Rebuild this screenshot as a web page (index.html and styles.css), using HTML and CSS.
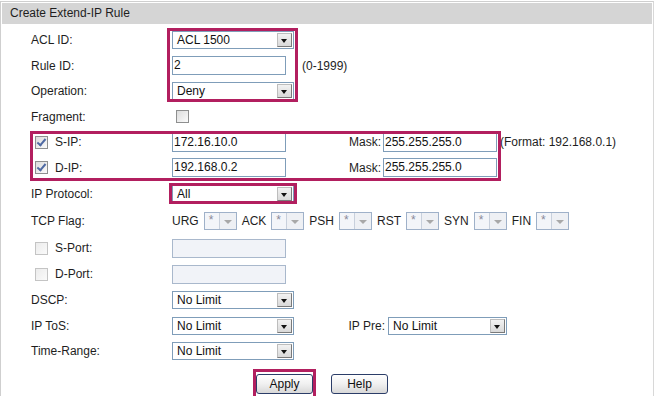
FILE: index.html
```html
<!DOCTYPE html>
<html lang="en">
<head>
  <meta charset="UTF-8">
  <title>Create Extend-IP Rule</title>
  <link rel="stylesheet" href="styles.css">
</head>
<body>

<div class="panel">
  <div class="panel-title">Create Extend-IP Rule</div>

  <div class="form">
    <div class="row h26">
      <span class="label">ACL ID:</span>
      <div class="select w122"><span>ACL 1500</span><i class="arrow"></i></div>
    </div>
    <div class="row h25">
      <span class="label">Rule ID:</span>
      <div class="input">2</div>
      <span class="hint">(0-1999)</span>
    </div>
    <div class="row h26">
      <span class="label">Operation:</span>
      <div class="select w122"><span>Deny</span><i class="arrow"></i></div>
    </div>
    <div class="row h25">
      <span class="label">Fragment:</span>
      <span class="check frag"></span>
    </div>
    <div class="row h26">
      <span class="label"><span class="check checked"></span>S-IP:</span>
      <div class="input">172.16.10.0</div>
      <span class="side-label mask">Mask:</span>
      <div class="input">255.255.255.0</div>
      <span class="format">(Format: 192.168.0.1)</span>
    </div>
    <div class="row h25">
      <span class="label"><span class="check checked"></span>D-IP:</span>
      <div class="input">192.168.0.2</div>
      <span class="side-label mask">Mask:</span>
      <div class="input">255.255.255.0</div>
    </div>
    <div class="row h27">
      <span class="label">IP Protocol:</span>
      <div class="select w122"><span>All</span><i class="arrow"></i></div>
    </div>
    <div class="row h28">
      <span class="label">TCP Flag:</span>
      <span class="flag">URG</span><div class="mini"><span>*</span><i></i></div>
      <span class="flag">ACK</span><div class="mini"><span>*</span><i></i></div>
      <span class="flag">PSH</span><div class="mini"><span>*</span><i></i></div>
      <span class="flag">RST</span><div class="mini"><span>*</span><i></i></div>
      <span class="flag">SYN</span><div class="mini"><span>*</span><i></i></div>
      <span class="flag">FIN</span><div class="mini"><span>*</span><i></i></div>
    </div>
    <div class="row h26">
      <span class="label"><span class="check off"></span>S-Port:</span>
      <div class="input disabled"></div>
    </div>
    <div class="row h26">
      <span class="label"><span class="check off"></span>D-Port:</span>
      <div class="input disabled"></div>
    </div>
    <div class="row h26">
      <span class="label">DSCP:</span>
      <div class="select w122"><span>No Limit</span><i class="arrow"></i></div>
    </div>
    <div class="row h25">
      <span class="label">IP ToS:</span>
      <div class="select w122"><span>No Limit</span><i class="arrow"></i></div>
      <span class="side-label pre">IP Pre:</span>
      <div class="select w119"><span>No Limit</span><i class="arrow"></i></div>
    </div>
    <div class="row h26">
      <span class="label">Time-Range:</span>
      <div class="select w122"><span>No Limit</span><i class="arrow"></i></div>
    </div>
  </div>

  <div class="actions">
    <button class="btn">Apply</button>
    <button class="btn">Help</button>
  </div>

  <!-- highlight marks drawn over the form -->
  <span class="mark mark-acl"></span>
  <span class="mark mark-ip"></span>
  <span class="mark mark-proto"></span>
  <span class="mark mark-apply"></span>
</div>

</body>
</html>
```

FILE: styles.css
```css
body {
  margin: 0;
  padding: 0;
  background-color: #fff;
  font-family: "Liberation Sans", Arial, sans-serif;
  font-size: 12px;
  color: #1e1e1e;
}
.panel {
  position: relative;
  width: 650px;
  height: 393px;
  margin-top: 1px;
  padding: 1px 1px 0 1px;
  border: 1px solid #cfcfcf;
  border-right-color: #d8d8d8;
}
.panel-title {
  height: 21px;
  line-height: 21px;
  padding-left: 8px;
  background-color: #d5d5d5;
  color: #1e1e1e;
}
.form {
  padding-top: 3px;
}
.row {
  display: flex;
  align-items: center;
  padding-left: 29px;
}
.h25 { height: 25px; }
.h26 { height: 26px; }
.h27 { height: 27px; }
.h28 { height: 28px; }
.label {
  display: flex;
  align-items: center;
  width: 141px;
  flex: none;
}

/* selects */
.select {
  position: relative;
  box-sizing: border-box;
  height: 18px;
  border: 1px solid #7f9db9;
  background-color: #fff;
  line-height: 16px;
  padding-left: 4px;
  color: #111;
}
.w122 { width: 122px; }
.w119 { width: 119px; }
.select .arrow {
  position: absolute;
  top: 1px;
  right: 1px;
  box-sizing: border-box;
  width: 15px;
  height: 14px;
  background: linear-gradient(#f2f2f2, #d9d9d9);
  border: 1px solid #bdbdbd;
  border-right-color: #7a7a7a;
  border-bottom-color: #7a7a7a;
}
.select .arrow::after {
  content: "";
  position: absolute;
  left: 3px;
  top: 5px;
  border-left: 3.5px solid transparent;
  border-right: 3.5px solid transparent;
  border-top: 4px solid #111;
}

/* text inputs */
.input {
  box-sizing: border-box;
  width: 114px;
  height: 19px;
  border: 1px solid #7f9db9;
  background-color: #fff;
  line-height: 17px;
  padding-left: 1px;
  color: #111;
}
.input.disabled {
  background-color: #f1f3f8;
  border-color: #a9b8cc;
}
.hint {
  margin-left: 16px;
}
.side-label {
  text-align: right;
  flex: none;
}
.side-label.mask {
  width: 95px;
  margin-right: 2px;
}
.side-label.pre {
  width: 91px;
  margin-right: 3px;
}
.format {
  margin-left: 3px;
}

/* checkboxes */
.check {
  box-sizing: border-box;
  display: inline-block;
  position: relative;
  width: 13px;
  height: 13px;
  border: 1px solid #8e8f8f;
  background: linear-gradient(135deg, #dcdcdc, #fbfbfb);
  margin-left: 4px;
  margin-right: 7px;
  flex: none;
}
.check.frag {
  margin-left: 4px;
}
.check.off {
  border-color: #c4c4c4;
  background: linear-gradient(135deg, #ececec, #fafafa);
}
.check.checked::after {
  content: "";
  position: absolute;
  left: 3px;
  top: 0px;
  width: 3px;
  height: 7px;
  border-right: 2px solid #4f6aa3;
  border-bottom: 2px solid #4f6aa3;
  transform: rotate(40deg);
}

/* tcp flag mini selects */
.flag {
  margin-right: 5px;
}
.mini {
  position: relative;
  box-sizing: border-box;
  width: 33px;
  height: 18px;
  border: 1px solid #9fb1c9;
  background-color: #f3f5f9;
  margin-right: 5px;
  line-height: 14px;
  padding-left: 4px;
  color: #8a8a9a;
  font-size: 12px;
}
.mini i {
  position: absolute;
  top: 0;
  right: 0;
  width: 16px;
  height: 16px;
  border-left: 1px solid #c8d0dc;
  background-color: #eef0f4;
}
.mini i::after {
  content: "";
  position: absolute;
  left: 4px;
  top: 7px;
  border-left: 4px solid transparent;
  border-right: 4px solid transparent;
  border-top: 4px solid #a8a8a8;
}

/* buttons */
.actions {
  display: flex;
  height: 31px;
  padding-top: 10px;
  box-sizing: border-box;
  padding-left: 254px;
  gap: 18px;
}
.btn {
  box-sizing: border-box;
  width: 57px;
  height: 20px;
  padding: 0;
  border: 1px solid #2b3d68;
  border-radius: 3px;
  background: linear-gradient(#ffffff, #f0f0f0 50%, #d8d8d8);
  font-family: "Liberation Sans", Arial, sans-serif;
  font-size: 12px;
  color: #111;
}

/* highlight boxes */
.mark {
  position: absolute;
  box-sizing: border-box;
  border: 3px solid #b21f5f;
  pointer-events: none;
}
.mark-acl {
  left: 166px;
  top: 26px;
  width: 131px;
  height: 74px;
}
.mark-ip {
  left: 29px;
  top: 129px;
  width: 471px;
  height: 50px;
}
.mark-proto {
  left: 168px;
  top: 181px;
  width: 128px;
  height: 21px;
}
.mark-apply {
  left: 252px;
  top: 367px;
  width: 63px;
  height: 32px;
}
```
